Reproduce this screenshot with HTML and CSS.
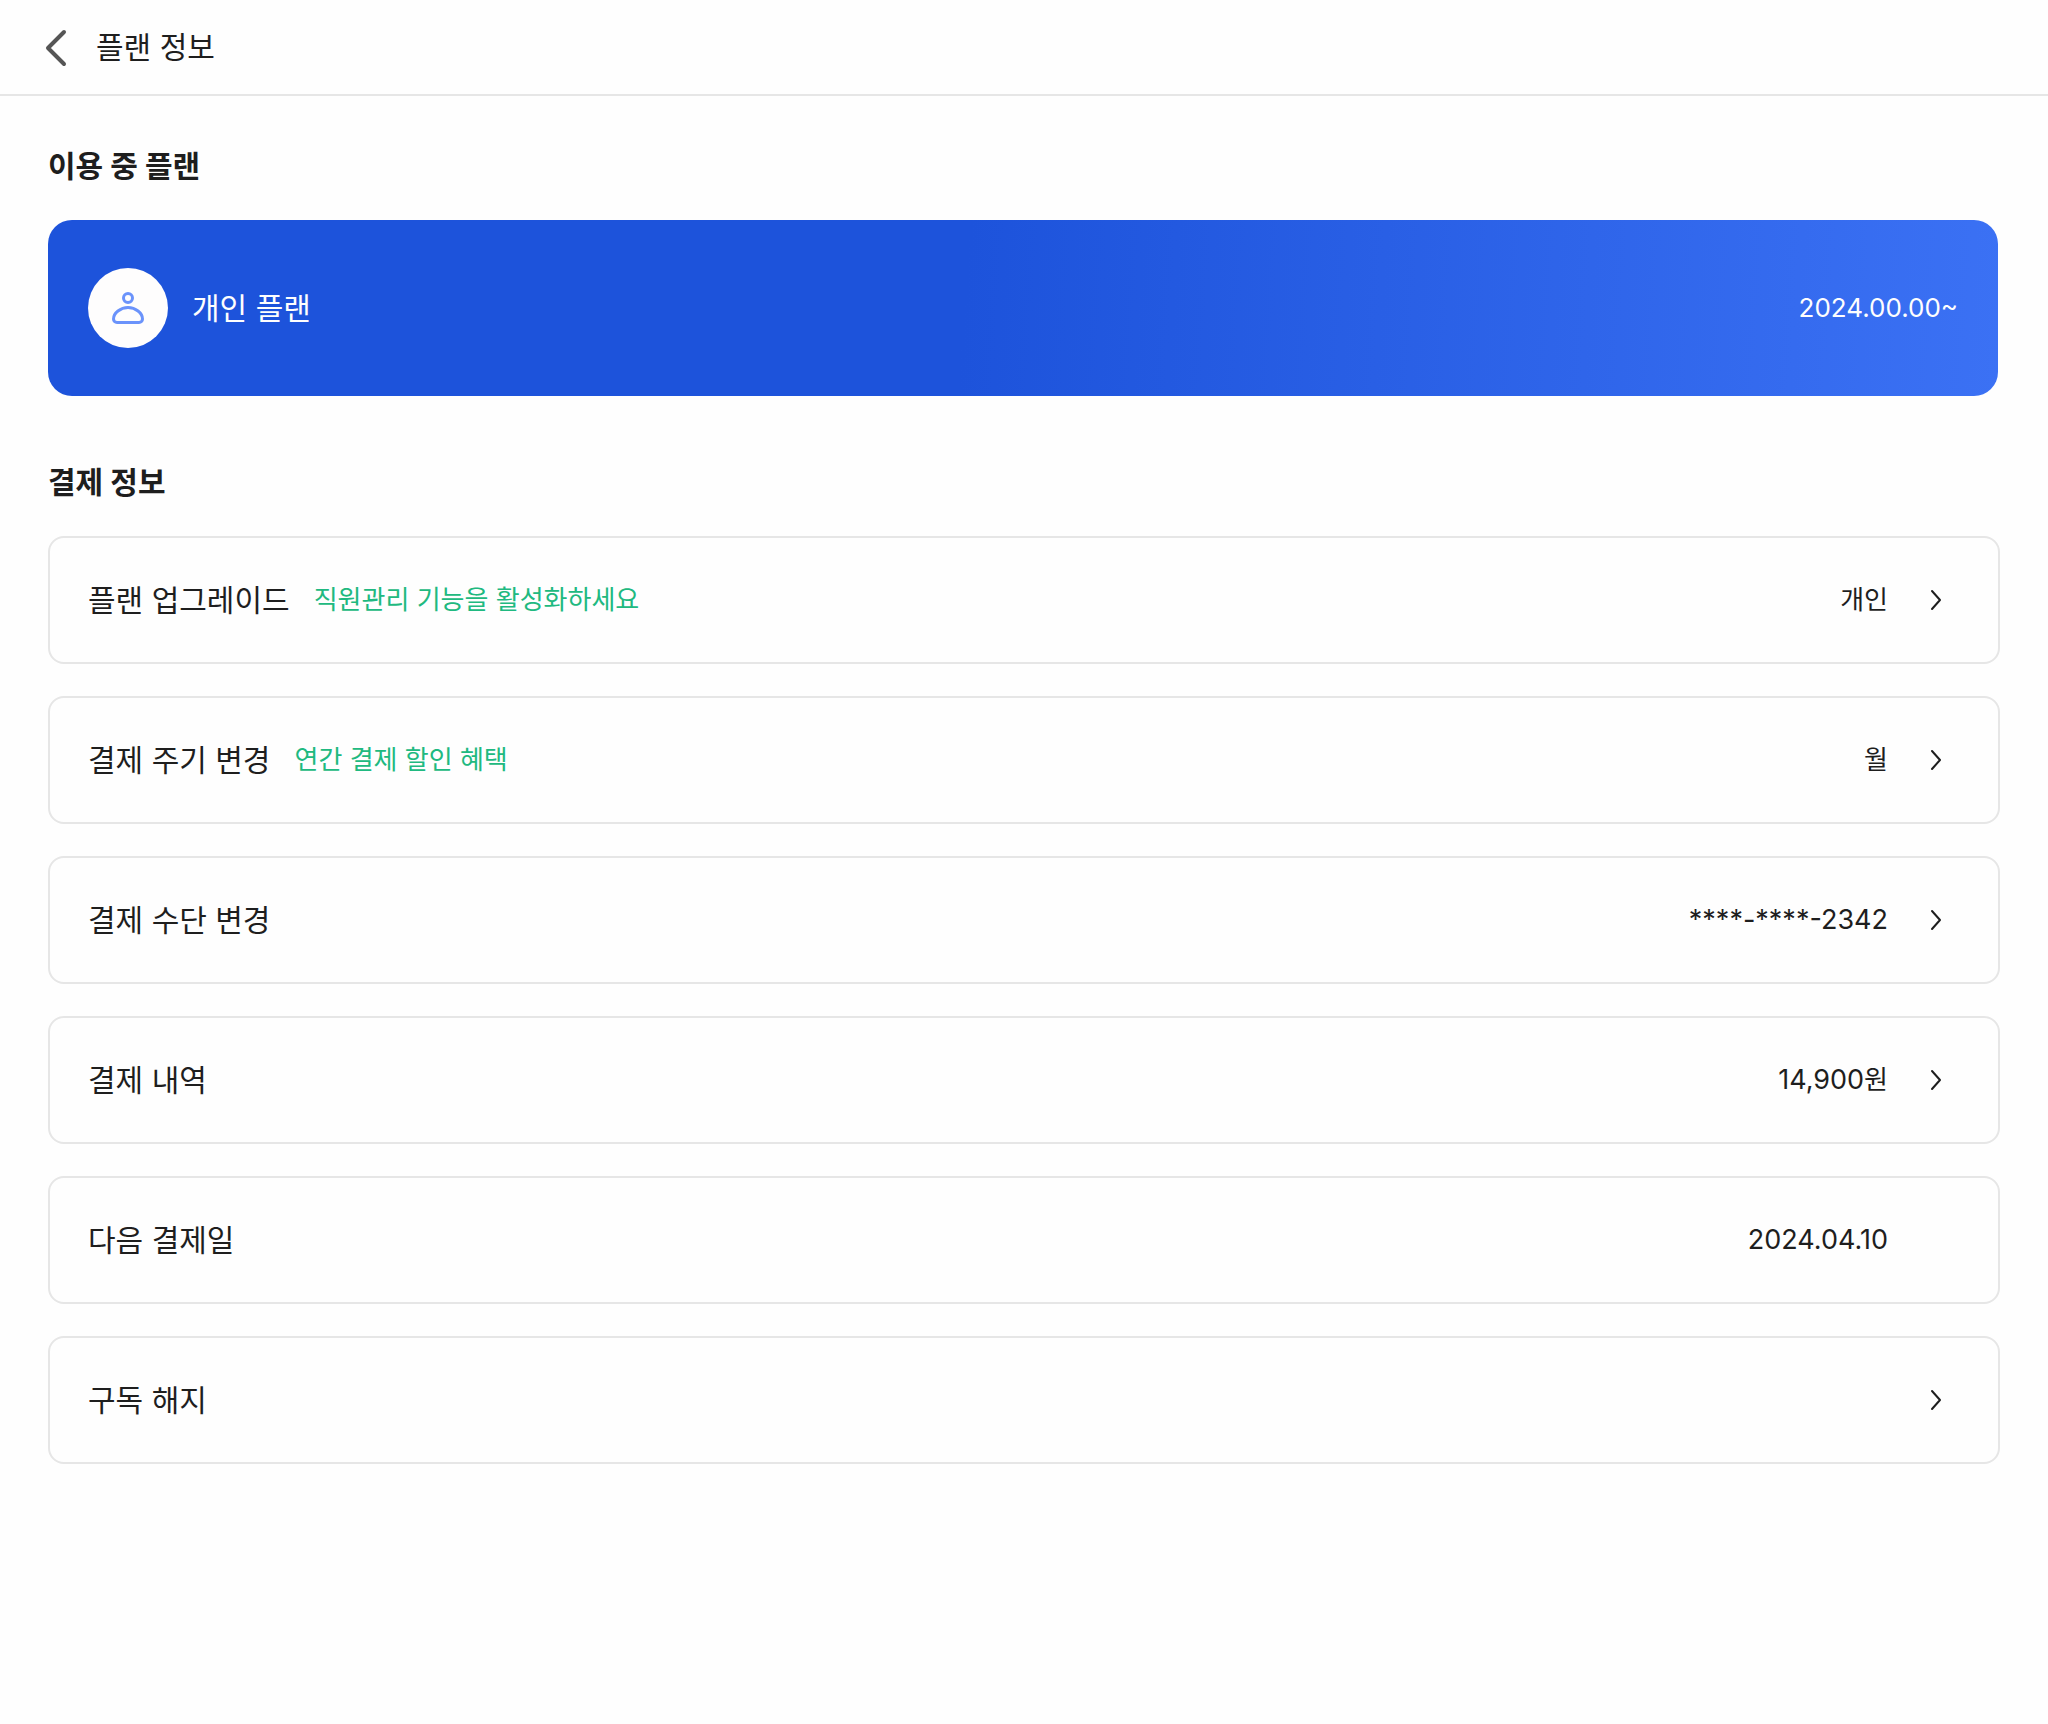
FILE: index.html
```html
<!DOCTYPE html>
<html lang="ko">
<head>
  <meta charset="utf-8">
  <meta name="viewport" content="width=device-width, initial-scale=1">
  <title>플랜 정보</title>
  <link rel="stylesheet" href="styles.css">
</head>
<body>
  <svg class="sprite" aria-hidden="true">
    <symbol id="chevron" viewBox="0 0 32 32">
      <path d="M12 7L20 16L12 25" fill="none" stroke="currentColor" stroke-width="2" stroke-linecap="round" stroke-linejoin="round"/>
    </symbol>
  </svg>

  <header class="topbar">
    <button class="back" type="button" aria-label="뒤로">
      <svg viewBox="0 0 48 48" aria-hidden="true">
        <path d="M32 9L16 25L32 41" fill="none" stroke="currentColor" stroke-width="4" stroke-linecap="round" stroke-linejoin="round"/>
      </svg>
    </button>
    <h1 class="topbar-title">플랜 정보</h1>
  </header>

  <main class="content">
    <section class="section">
      <h2 class="section-title">이용 중 플랜</h2>
      <div class="plan">
        <span class="plan-icon">
          <svg viewBox="0 0 48 48" aria-hidden="true">
            <circle cx="24" cy="14" r="4.5" fill="none" stroke="currentColor" stroke-width="3"/>
            <path d="M24 23.500C31.500 23.500 38.500 29 38.500 35C38.500 37 37 38.500 35 38.500H13C11 38.500 9.500 37 9.500 35C9.500 29 16.500 23.500 24 23.500Z" fill="none" stroke="currentColor" stroke-width="3"/>
          </svg>
        </span>
        <span class="plan-name">개인 플랜</span>
        <span class="plan-date">2024.00.00~</span>
      </div>
    </section>

    <section class="section">
      <h2 class="section-title">결제 정보</h2>
      <ul class="rows">
        <li>
          <button class="row" type="button">
            <span class="row-label">플랜 업그레이드</span>
            <span class="row-hint">직원관리 기능을 활성화하세요</span>
            <span class="row-value"><span class="unit">개인</span></span>
            <svg class="row-icon" aria-hidden="true"><use href="#chevron"/></svg>
          </button>
        </li>
        <li>
          <button class="row" type="button">
            <span class="row-label">결제 주기 변경</span>
            <span class="row-hint">연간 결제 할인 혜택</span>
            <span class="row-value"><span class="unit">월</span></span>
            <svg class="row-icon" aria-hidden="true"><use href="#chevron"/></svg>
          </button>
        </li>
        <li>
          <button class="row" type="button">
            <span class="row-label">결제 수단 변경</span>
            <span class="row-value">****-****-2342</span>
            <svg class="row-icon" aria-hidden="true"><use href="#chevron"/></svg>
          </button>
        </li>
        <li>
          <button class="row" type="button">
            <span class="row-label">결제 내역</span>
            <span class="row-value">14,900<span class="unit">원</span></span>
            <svg class="row-icon" aria-hidden="true"><use href="#chevron"/></svg>
          </button>
        </li>
        <li>
          <div class="row">
            <span class="row-label">다음 결제일</span>
            <span class="row-value">2024.04.10</span>
            <span class="row-icon"></span>
          </div>
        </li>
        <li>
          <button class="row" type="button">
            <span class="row-label">구독 해지</span>
            <span class="row-value"></span>
            <svg class="row-icon" aria-hidden="true"><use href="#chevron"/></svg>
          </button>
        </li>
      </ul>
    </section>
  </main>
</body>
</html>
```

FILE: styles.css
```css
*,
*::before,
*::after {
  box-sizing: border-box;
}

body {
  margin: 0;
  background: #fefefe;
  color: #1e1e1e;
  font-family: Inter, "Noto Sans CJK KR", sans-serif;
  font-size: 30px;
  line-height: 44px;
}

h1,
h2,
ul {
  margin: 0;
  padding: 0;
}

button {
  border: 0;
  background: none;
  color: inherit;
  font: inherit;
  text-align: left;
  cursor: pointer;
}

.sprite {
  display: none;
}

.topbar {
  display: flex;
  align-items: center;
  gap: 16px;
  height: 96px;
  padding: 0 32px;
  border-bottom: 2px solid #e6e6e6;
}

.back {
  width: 48px;
  height: 48px;
  padding: 0;
  color: #555;
}

.back svg {
  display: block;
  width: 48px;
  height: 48px;
}

.topbar-title {
  font-size: 30px;
  font-weight: 400;
}

.content {
  display: flex;
  flex-direction: column;
  gap: 64px;
  padding: 48px;
}

.section {
  display: flex;
  flex-direction: column;
  gap: 32px;
}

.section-title {
  height: 44px;
  font-size: 30px;
  font-weight: 700;
}

.plan {
  display: flex;
  align-items: center;
  gap: 24px;
  margin-right: 2px;
  padding: 48px 40px;
  border-radius: 24px;
  background: linear-gradient(94deg, #1d53db 47%, #3b71f4);
  color: #fefefe;
}

.plan-icon {
  display: grid;
  place-items: center;
  width: 80px;
  height: 80px;
  border-radius: 50%;
  background: #fefdfd;
  color: #6b93fb;
}

.plan-icon svg {
  width: 48px;
  height: 48px;
}

.plan-date {
  margin-left: auto;
  font-size: 26px;
}

.rows {
  display: flex;
  flex-direction: column;
  gap: 32px;
  list-style: none;
}

.row {
  display: flex;
  align-items: center;
  width: 100%;
  min-height: 128px;
  padding: 24px 46px 24px 38px;
  border: 2px solid #e6e6e6;
  border-radius: 16px;
}

.row-hint {
  margin-left: 24px;
  color: #20b980;
  font-size: 26px;
}

.row-value {
  margin-left: auto;
  font-size: 27px;
}

.unit {
  font-size: 26px;
}

.row-icon {
  width: 32px;
  height: 32px;
  margin-left: 32px;
}
```
